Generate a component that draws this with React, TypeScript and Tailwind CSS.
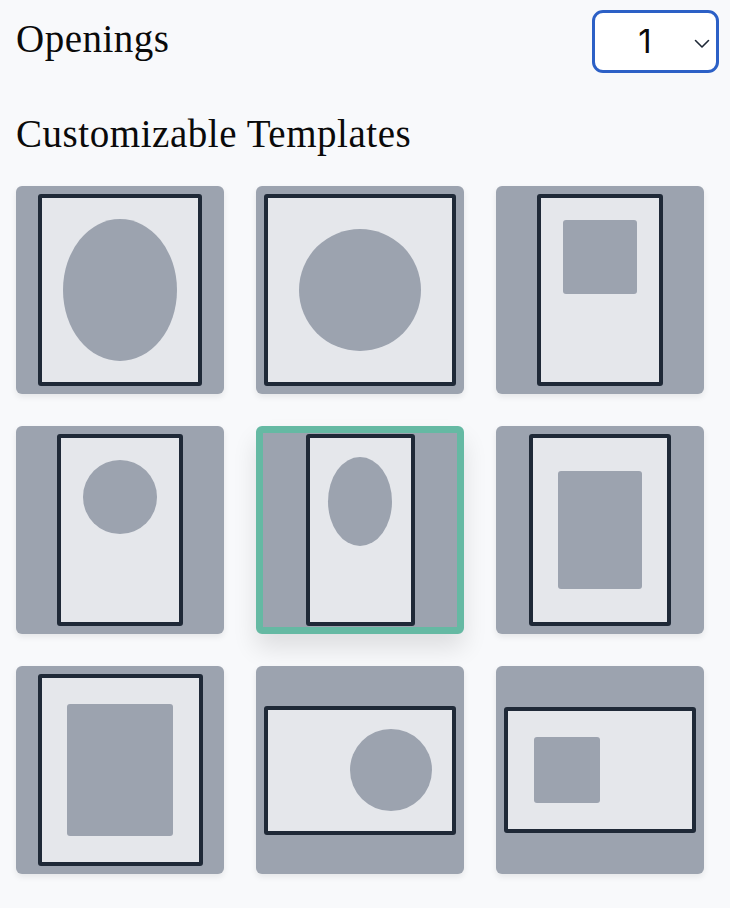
import React from "react";

const serif = { fontFamily: '"Liberation Serif", "DejaVu Serif", serif' };

function Tile({ children, selected = false }: { children: React.ReactNode; selected?: boolean }) {
  return (
    <div
      className={
        selected
          ? "h-[208px] w-[208px] rounded-md border-[7px] border-[#65b9a3] bg-[#9ca3af] flex items-center justify-center shadow-[0_14px_24px_rgba(0,0,0,0.11)]"
          : "h-[208px] w-[208px] rounded-md bg-[#9ca3af] flex items-center justify-center shadow-[0_3px_6px_rgba(0,0,0,0.08)]"
      }
    >
      {children}
    </div>
  );
}

export default function App() {
  return (
    <div className="min-h-[908px] w-[730px] bg-[#f8f9fb] text-[#0a0a0a]" style={serif}>
      <div className="flex items-start justify-between pl-4 pr-[11px] pt-[10px]">
        <div className="mt-[6px] text-[39px] leading-[45px] tracking-[0.5px]">Openings</div>
        <div className="relative flex h-[63px] w-[127px] items-center justify-center rounded-[11px] border-[3px] border-[#2c60c6] bg-white pr-[21px]">
          <span
            className="text-[33px] leading-none"
            style={{ fontFamily: 'Inter, "Liberation Sans", sans-serif' }}
          >
            1
          </span>
          <svg
            className="absolute right-[6px] top-[26px]"
            width="16"
            height="10"
            viewBox="0 0 16 10"
            fill="none"
            stroke="#1f2937"
            strokeWidth="1.6"
            strokeLinecap="round"
            strokeLinejoin="round"
          >
            <path d="M1.5 1.5 L8 8 L14.5 1.5" />
          </svg>
        </div>
      </div>

      <div className="mt-[38px] pl-4 text-[39px] leading-[45px] tracking-[0.55px]">Customizable Templates</div>

      <div className="mt-[30px] grid w-[720px] grid-cols-[208px_208px_208px] gap-8 pl-4">
        {/* 1 */}
        <Tile>
          <div className="flex h-[192px] w-[164px] items-center justify-center rounded-[3px] border-4 border-[#1f2937] bg-[#e5e7eb]">
            <div className="h-[142px] w-[114px] rounded-[50%] bg-[#9ca3af]" />
          </div>
        </Tile>
        {/* 2 */}
        <Tile>
          <div className="flex h-[192px] w-[192px] items-center justify-center rounded-[3px] border-4 border-[#1f2937] bg-[#e5e7eb]">
            <div className="h-[122px] w-[122px] rounded-[50%] bg-[#9ca3af]" />
          </div>
        </Tile>
        {/* 3 */}
        <Tile>
          <div className="flex h-[192px] w-[126px] flex-col items-center rounded-[3px] border-4 border-[#1f2937] bg-[#e5e7eb] pt-[22px]">
            <div className="h-[74px] w-[74px] rounded-[3px] bg-[#9ca3af]" />
          </div>
        </Tile>
        {/* 4 */}
        <Tile>
          <div className="flex h-[192px] w-[126px] flex-col items-center rounded-[3px] border-4 border-[#1f2937] bg-[#e5e7eb] pt-[22px]">
            <div className="h-[74px] w-[74px] rounded-[50%] bg-[#9ca3af]" />
          </div>
        </Tile>
        {/* 5 selected */}
        <Tile selected>
          <div className="flex h-[192px] w-[109px] flex-col items-center rounded-[3px] border-4 border-[#1f2937] bg-[#e5e7eb] pt-[19px]">
            <div className="h-[89px] w-[64px] rounded-[50%] bg-[#9ca3af]" />
          </div>
        </Tile>
        {/* 6 */}
        <Tile>
          <div className="flex h-[192px] w-[142px] items-center justify-center rounded-[3px] border-4 border-[#1f2937] bg-[#e5e7eb]">
            <div className="h-[118px] w-[84px] rounded-[3px] bg-[#9ca3af]" />
          </div>
        </Tile>
        {/* 7 */}
        <Tile>
          <div className="flex h-[192px] w-[165px] items-center justify-center rounded-[3px] border-4 border-[#1f2937] bg-[#e5e7eb]">
            <div className="h-[132px] w-[106px] rounded-[3px] bg-[#9ca3af]" />
          </div>
        </Tile>
        {/* 8 */}
        <Tile>
          <div className="flex h-[129px] w-[192px] items-center justify-end rounded-[3px] border-4 border-[#1f2937] bg-[#e5e7eb] pr-[20px]">
            <div className="h-[82px] w-[82px] rounded-[50%] bg-[#9ca3af]" />
          </div>
        </Tile>
        {/* 9 */}
        <Tile>
          <div className="flex h-[126px] w-[192px] items-center justify-start rounded-[3px] border-4 border-[#1f2937] bg-[#e5e7eb] pl-[26px]">
            <div className="h-[66px] w-[66px] rounded-[3px] bg-[#9ca3af]" />
          </div>
        </Tile>
      </div>
    </div>
  );
}
